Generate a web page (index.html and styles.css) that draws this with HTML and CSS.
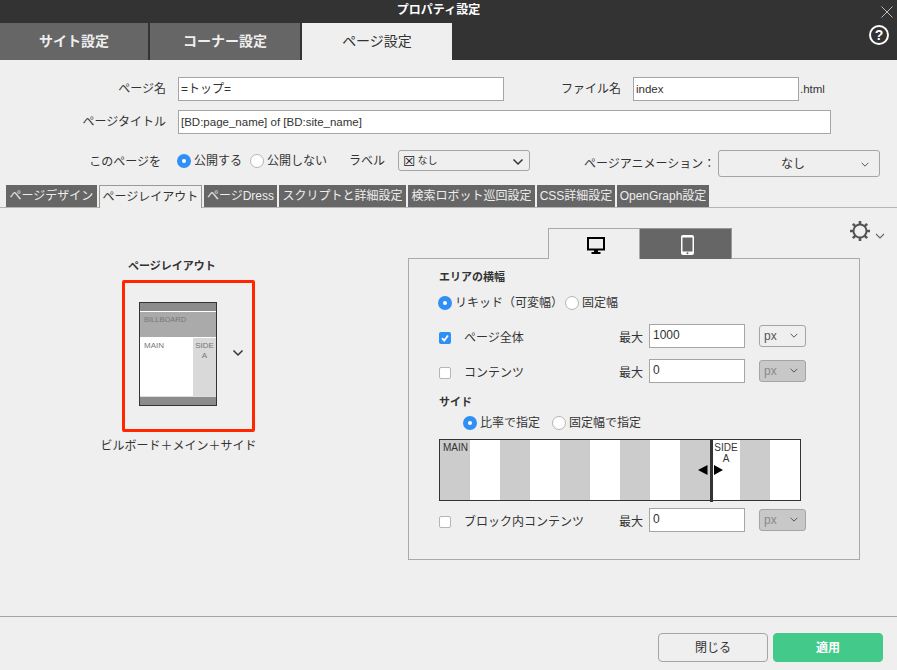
FILE: index.html
```html
<!DOCTYPE html>
<html lang="ja">
<head>
<meta charset="utf-8">
<title>プロパティ設定</title>
<link rel="stylesheet" href="styles.css">
</head>
<body>
<div class="app">
  <header class="header">
    <div class="title">プロパティ設定</div>
    <svg class="close" viewBox="0 0 12 12"><path d="M.5.5l11 11M11.5.5l-11 11"/></svg>
    <div class="help">?</div>
    <nav class="tabs">
      <div class="tab tab-a">サイト設定</div>
      <div class="tab tab-b">コーナー設定</div>
      <div class="tab tab-c active">ページ設定</div>
    </nav>
  </header>

  <section class="form">
    <div class="row r1">
      <div class="lbl w166">ページ名</div>
      <div class="input w326">=トップ=</div>
      <div class="lbl w117">ファイル名</div>
      <div class="input w166">index</div>
      <div class="ext">.html</div>
    </div>
    <div class="row r2">
      <div class="lbl w166">ページタイトル</div>
      <div class="input w653">[BD:page_name] of [BD:site_name]</div>
    </div>
    <div class="row r3">
      <div class="lbl w161 raise">このページを</div>
      <span class="radio on first"></span><span class="rtext">公開する</span>
      <span class="radio gap8"></span><span class="rtext">公開しない</span>
      <span class="lbl-inline l-label">ラベル</span>
      <div class="select sel-label"><span class="xbox">☒</span><span class="nashi">なし</span>
        <svg class="chev" viewBox="0 0 12 8"><path d="M1.5 1.5L6 6l4.500-4.500"/></svg></div>
      <span class="lbl-inline l-anim">ページアニメーション：</span>
      <div class="select sel-anim"><span class="anim-text">なし</span>
        <svg class="chev small" viewBox="0 0 12 8"><path d="M2 2l4 4 4-4"/></svg></div>
    </div>
  </section>

  <nav class="subtabs">
    <div class="sub s1">ページデザイン</div>
    <div class="sub s2 active">ページレイアウト</div>
    <div class="sub s3">ページDress</div>
    <div class="sub s4">スクリプトと詳細設定</div>
    <div class="sub s5">検索ロボット巡回設定</div>
    <div class="sub s6">CSS詳細設定</div>
    <div class="sub s7">OpenGraph設定</div>
  </nav>

  <main class="body">
    <div class="left">
      <div class="left-title">ページレイアウト</div>
      <div class="redbox">
        <div class="thumb">
          <div class="t-band"></div>
          <div class="t-bill">BILLBOARD</div>
          <div class="t-mid">
            <div class="t-main">MAIN</div>
            <div class="t-side">SIDE A</div>
          </div>
          <div class="t-band t-foot"></div>
        </div>
        <svg class="thumb-chev" viewBox="0 0 12 8"><path d="M1.500 1.500L6 6l4.500-4.500"/></svg>
      </div>
      <div class="caption">ビルボード＋メイン＋サイド</div>
    </div>

    <div class="right">
      <div class="device-row">
        <div class="dev dev-on">
          <svg width="18" height="18" viewBox="0 0 18 18"><rect x="1" y="1" width="16" height="11.500" fill="none" stroke="#000" stroke-width="2"/><path d="M7 13h4v2h2.500v2h-9v-2H7z" fill="#000"/></svg>
        </div>
        <div class="dev dev-off">
          <svg width="13" height="20" viewBox="0 0 13 20"><rect width="13" height="20" rx="2" fill="#fff"/><rect x="1.500" y="2.500" width="10" height="14" fill="#666"/><circle cx="6.500" cy="18.200" r="1" fill="#666"/></svg>
        </div>
        <div class="gear-wrap">
          <svg width="22" height="22" viewBox="0 0 22 22"><g stroke="#555" fill="none"><circle cx="11" cy="11" r="6.500" stroke-width="2"/><path stroke-width="2.600" d="M11 1v3.500M11 17.500V21M1 11h3.500M17.500 11H21M3.900 3.900l2.500 2.500M15.600 15.600l2.500 2.500M18.100 3.900l-2.500 2.500M6.400 15.600l-2.500 2.500"/></g></svg>
          <svg class="gear-chev" viewBox="0 0 10 6"><path d="M1 1l4 4 4-4"/></svg>
        </div>
      </div>

      <div class="panel">
        <div class="h">エリアの横幅</div>
        <div class="radios m-a">
          <span class="radio on"></span><span class="rtext">リキッド（可変幅）</span>
          <span class="radio tight"></span><span class="rtext">固定幅</span>
        </div>
        <div class="frow m-b">
          <span class="check on"><svg viewBox="0 0 12 12"><path d="M3 6.200l2.200 2.300L9 3.500"/></svg></span>
          <span class="flabel">ページ全体</span>
          <span class="max">最大</span>
          <div class="input num">1000</div>
          <div class="select unit">px<svg class="chev small" viewBox="0 0 12 8"><path d="M2 2l4 4 4-4"/></svg></div>
        </div>
        <div class="frow m-c">
          <span class="check"></span>
          <span class="flabel">コンテンツ</span>
          <span class="max">最大</span>
          <div class="input num">0</div>
          <div class="select unit off">px<svg class="chev small" viewBox="0 0 12 8"><path d="M2 2l4 4 4-4"/></svg></div>
        </div>
        <div class="h m-d">サイド</div>
        <div class="radios m-e">
          <span class="radio on"></span><span class="rtext">比率で指定</span>
          <span class="radio gap12"></span><span class="rtext">固定幅で指定</span>
        </div>
        <div class="slider">
          <div class="s-main">MAIN</div>
          <div class="s-div">
            <svg class="arrows" width="25" height="12" viewBox="0 0 25 12"><path d="M9.500 1v10L0 6zM16 1v10L25 6z" fill="#000"/></svg>
          </div>
          <div class="s-side">SIDE A</div>
        </div>
        <div class="frow m-f">
          <span class="check"></span>
          <span class="flabel">ブロック内コンテンツ</span>
          <span class="max">最大</span>
          <div class="input num">0</div>
          <div class="select unit off">px<svg class="chev small" viewBox="0 0 12 8"><path d="M2 2l4 4 4-4"/></svg></div>
        </div>
      </div>
    </div>
  </main>

  <footer class="footer">
    <div class="btn">閉じる</div>
    <div class="btn apply">適用</div>
  </footer>
</div>
</body>
</html>
```
FILE: styles.css
```css
* { box-sizing: border-box; }
html, body { margin: 0; padding: 0; }
body {
  width: 897px; height: 670px; overflow: hidden;
  background: #efefef; color: #333;
  font-family: "Liberation Sans", "Noto Sans CJK JP", sans-serif;
  font-size: 12px; line-height: 16px;
}
.app { display: flex; flex-direction: column; height: 670px; }

/* header */
.header { position: relative; height: 60px; flex: none; background: #333; }
.title { height: 23px; line-height: 20px; text-align: center; color: #fff; font-weight: 700; font-size: 12px; padding-right: 20px; }
.close { position: absolute; left: 881px; top: 6px; width: 12px; height: 12px; }
.close path { stroke: #bbb; stroke-width: 1; fill: none; }
.help {
  position: absolute; left: 869px; top: 25px; width: 20px; height: 20px;
  border: 2px solid #fff; border-radius: 50%;
  color: #fff; font-size: 14px; font-weight: 700; line-height: 16px; text-align: center;
}
.tabs { display: flex; gap: 2px; height: 37px; }
.tab { width: 148px; background: #666; color: #eee; font-size: 14px; font-weight: 700; line-height: 37px; text-align: center; }
.tab-b { width: 150px; }
.tab-c { width: 150px; }
.tab.active { background: #efefef; color: #333; font-weight: 400; }

/* form */
.form { flex: none; height: 125px; padding-top: 17px; }
.row { display: flex; align-items: center; }
.r1 { height: 24px; }
.r2 { height: 24px; margin-top: 9px; }
.r3 { height: 27px; margin-top: 16px; }
.lbl { text-align: right; margin-right: 12px; }
.w166 { width: 166px; }
.w117 { width: 117px; }
.w161 { width: 161px; margin-right: 16px; }
.raise { position: relative; top: -2px; }
.input {
  height: 24px; background: #fff; border: 1px solid #a5a5a5;
  line-height: 22px; padding-left: 2px; color: #333; white-space: nowrap; font-size: 11.500px;
}
.w326 { width: 326px; font-size: 12px; }
.w653 { width: 653px; }
.ext { margin-left: 1px; font-size: 11.500px; }

.radio {
  flex: none; display: inline-block; width: 14px; height: 14px; border-radius: 50%;
  background: #fff; border: 1px solid #b5b5b5; margin-right: 3px;
}
.radio.on { background: #2f8ff5; border: 0; position: relative; }
.radio.on::after {
  content: ""; position: absolute; left: 5px; top: 5px; width: 4px; height: 4px;
  border-radius: 50%; background: #fff;
}
.gap8 { margin-left: 8px; }
.gap12 { margin-left: 12px; }
.tight { margin-left: 2px; }
.rtext { white-space: nowrap; }
.r3 .radio, .r3 .rtext, .r3 .l-label { position: relative; top: -3px; }
.r3 .sel-label { align-self: flex-start; }
.lbl-inline { white-space: nowrap; }
.l-label { margin-left: 22px; margin-right: 13px; }
.l-anim { margin-left: 54px; margin-right: 6px; width: 128px; text-align: left; white-space: nowrap; }

.select {
  position: relative; display: flex; align-items: center;
  background: #efefef; border: 1px solid #a5a5a5; border-radius: 3px;
}
.chev { position: absolute; right: 5px; top: 7px; width: 12px; height: 8px; }
.chev path { fill: none; stroke: #333; stroke-width: 1.500; }
.chev.small { width: 10px; height: 7px; }
.chev.small path { stroke: #555; stroke-width: 1.200; }
.sel-label { width: 132px; height: 21px; padding-left: 4px; }
.xbox { font-family: "DejaVu Sans", sans-serif; font-size: 14px; line-height: 18px; color: #222; }
.nashi { font-size: 10px; margin-left: 2px; }
.sel-anim { width: 162px; height: 27px; justify-content: center; }
.sel-anim .anim-text { position: relative; left: -6px; }
.sel-anim .chev { top: 10px; right: 9px; }

/* sub tabs */
.subtabs { flex: none; display: flex; height: 23px; padding-left: 6px; gap: 2px; border-bottom: 1px solid #b5b5b5; }
.sub { height: 22px; background: #666; color: #eee; line-height: 22px; text-align: center; white-space: nowrap; }
.s1 { width: 91px; }
.s2 { width: 103px; }
.s3 { width: 73px; }
.s4 { width: 127px; }
.s5 { width: 127px; }
.s6 { width: 78px; }
.s7 { width: 92px; }
.sub.active { height: 23px; background: #efefef; color: #333; border: 1px solid #999; border-bottom: 0; position: relative; }

/* body */
.body { flex: 1; display: flex; min-height: 0; }
.left { width: 408px; padding: 51px 0 0 100px; flex: none; }
.left-title { margin-left: 28px; height: 14px; line-height: 14px; font-size: 11px; font-weight: 700; }
.redbox {
  display: flex; align-items: flex-start;
  width: 133px; height: 152px; margin: 7px 0 0 22px;
  border: 3px solid #ff2600; border-radius: 2px; padding: 19px 0 0 14px;
}
.thumb { width: 78px; height: 104px; flex: none; border: 1px solid #333; background: #fff; display: flex; flex-direction: column; font-size: 8px; line-height: 10px; color: #777; }
.t-band { height: 8px; background: #8c8c8c; flex: none; }
.t-bill { height: 25px; flex: none; margin-top: 1px; background: #aaa; padding: 3px 0 0 4px; font-size: 7.500px; }
.t-mid { flex: 1; display: flex; border-bottom: 1px solid #ddd; }
.t-main { flex: 1; padding: 4px 0 0 4px; }
.t-side { width: 23px; margin-top: 1px; background: #d9d9d9; text-align: center; padding-top: 3px; line-height: 10px; }
.t-foot { height: 8px; }
.thumb-chev { width: 12px; height: 8px; margin: 47px 0 0 15px; flex: none; }
.thumb-chev path { fill: none; stroke: #333; stroke-width: 1.500; }
.caption { width: 157px; margin-top: 6px; text-align: center; white-space: nowrap; }

.right { flex: 1; padding-top: 20px; }
.device-row { display: flex; align-items: flex-start; height: 31px; padding-left: 140px; position: relative; z-index: 1; }
.dev { width: 92px; height: 31px; display: flex; align-items: center; justify-content: center; padding-left: 4px; }
.dev-on { background: #efefef; border: 1px solid #aaa; border-bottom: 0; padding-top: 3px; }
.dev-off { background: #666; border-top: 1px solid #999; border-right: 1px solid #999; padding-top: 1px; }
.gear-wrap { display: flex; align-items: flex-end; margin: -8px 0 0 117px; }
.gear-chev { width: 10px; height: 6px; margin: 0 0 3px 4px; }
.gear-chev path { fill: none; stroke: #666; stroke-width: 1.100; }

.panel { width: 452px; height: 302px; margin-top: -1px; border: 1px solid #aaa; padding: 11px 0 0 30px; }
.h { height: 14px; line-height: 14px; font-weight: 700; font-size: 11px; }
.radios { display: flex; align-items: center; height: 16px; }
.m-a { margin-top: 11px; margin-left: -1px; }
.frow { display: flex; align-items: center; height: 24px; }
.m-b { margin-top: 13px; }
.m-c { margin-top: 11px; }
.m-d { margin-top: 12px; }
.m-e { margin-top: 6px; padding-left: 24px; }
.m-f { margin-top: 7px; }
.check { flex: none; width: 12px; height: 12px; border-radius: 2px; background: #fff; border: 1px solid #b5b5b5; margin: 4px 13px 0 0; display: block; }
.check.on { background: #2f8ff5; border: 0; }
.check svg { display: block; width: 12px; height: 12px; }
.check path { fill: none; stroke: #fff; stroke-width: 1.800; }
.flabel { width: 155px; white-space: nowrap; margin-top: 4px; }
.max { width: 30px; margin-top: 4px; }
.num { width: 96px; padding-left: 3px; line-height: 21px; font-size: 12px; }
.unit { width: 47px; height: 22px; margin-left: 14px; padding-left: 4px; color: #555; }
.unit .chev { top: 6px; right: 6px; }
.unit.off { background: #c8c8c8; color: #8a8a8a; }

.slider {
  display: flex; width: 362px; height: 62px; margin-top: 8px;
  border: 1px solid #333;
  background: repeating-linear-gradient(90deg, #ccc 0, #ccc 30px, #fff 30px, #fff 60px);
  font-size: 10px; line-height: 11px;
}
.s-main { width: 270px; padding: 2px 0 0 3px; }
.s-div { position: relative; width: 3px; height: 62px; background: #333; flex: none; }
.arrows { position: absolute; left: -12px; top: 24px; }
.s-side { width: 26px; padding-top: 2px; text-align: center; }

/* footer */
.footer { flex: none; height: 54px; border-top: 1px solid #a5a5a5; display: flex; justify-content: flex-end; gap: 5px; padding: 16px 14px 0 0; }
.btn { width: 110px; height: 29px; border: 1px solid #a5a5a5; border-radius: 4px; line-height: 28px; text-align: center; }
.apply { background: #43c98a; border-color: #43c98a; color: #fff; font-weight: 700; }
```
